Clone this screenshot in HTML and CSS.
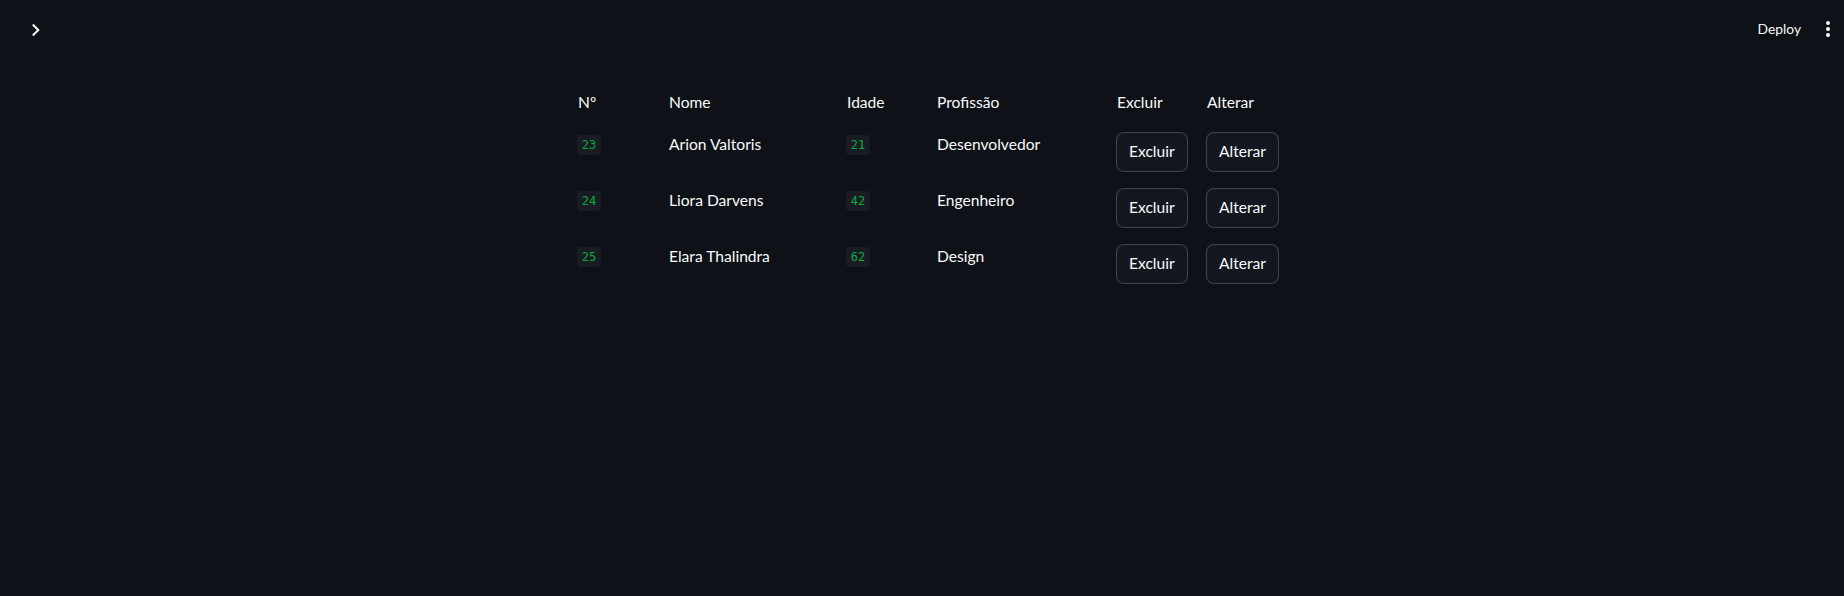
FILE: index.html
```html
<!DOCTYPE html>
<html lang="pt">
<head>
<meta charset="utf-8">
<title>App</title>
<link rel="stylesheet" href="styles.css">
</head>
<body>
<header class="topbar">
  <button class="sidebar-toggle" aria-label="Abrir barra lateral">
    <svg width="8" height="12" viewBox="0 0 8 12"><path d="M1.5 1.2 L6.3 6 L1.5 10.8" fill="none" stroke="#fafafa" stroke-width="2" stroke-linecap="square"/></svg>
  </button>
  <div class="topbar-actions">
    <button class="deploy">Deploy</button>
    <button class="menu" aria-label="Menu">
      <svg width="6" height="18" viewBox="0 0 6 18"><circle cx="3" cy="3" r="2"/><circle cx="3" cy="9" r="2"/><circle cx="3" cy="15" r="2"/></svg>
    </button>
  </div>
</header>
<main class="main">
  <div class="table">
    <div class="cell head">Nº</div>
    <div class="cell head">Nome</div>
    <div class="cell head">Idade</div>
    <div class="cell head">Profissão</div>
    <div class="cell head">Excluir</div>
    <div class="cell head">Alterar</div>

    <div class="cell"><code class="badge">23</code></div>
    <div class="cell text">Arion Valtoris</div>
    <div class="cell"><code class="badge">21</code></div>
    <div class="cell text">Desenvolvedor</div>
    <div class="cell"><button class="btn">Excluir</button></div>
    <div class="cell"><button class="btn">Alterar</button></div>

    <div class="cell"><code class="badge">24</code></div>
    <div class="cell text">Liora Darvens</div>
    <div class="cell"><code class="badge">42</code></div>
    <div class="cell text">Engenheiro</div>
    <div class="cell"><button class="btn">Excluir</button></div>
    <div class="cell"><button class="btn">Alterar</button></div>

    <div class="cell"><code class="badge">25</code></div>
    <div class="cell text">Elara Thalindra</div>
    <div class="cell"><code class="badge">62</code></div>
    <div class="cell text">Design</div>
    <div class="cell"><button class="btn">Excluir</button></div>
    <div class="cell"><button class="btn">Alterar</button></div>
  </div>
</main>
</body>
</html>
```

FILE: styles.css
```css
html, body {
  margin: 0;
  padding: 0;
  background: #0e1117;
  color: #fafafa;
  font-family: "Source Sans Pro", Lato, "Liberation Sans", sans-serif;
  font-size: 15.6px;
  height: 100%;
}

.topbar {
  height: 60px;
  display: flex;
  align-items: center;
  justify-content: space-between;
  padding: 0 12px 0 29px;
  box-sizing: border-box;
}

.sidebar-toggle, .deploy, .menu {
  background: none;
  border: 0;
  padding: 0;
  color: #fafafa;
  cursor: pointer;
}

.sidebar-toggle {
  width: 14px;
  height: 14px;
  display: flex;
  align-items: center;
  justify-content: center;
  margin-top: 0;
}

.topbar-actions {
  display: flex;
  align-items: center;
  gap: 23px;
  margin-top: -2px;
}

.deploy {
  font-family: inherit;
  font-size: 13.8px;
  line-height: 20px;
}

.menu {
  display: flex;
  fill: #fafafa;
  width: 8px;
  justify-content: center;
}

.main {
  padding-top: 30px;
}

.table {
  margin-left: calc(50% - 345px);
  display: grid;
  grid-template-columns: 91px 178px 90px 180px 90px 90px;
  grid-auto-rows: auto;
  row-gap: 16px;
}

.cell {
  line-height: 25.6px;
  white-space: nowrap;
}

.head, .text {
  padding-left: 1px;
}

.badge {
  display: inline-block;
  margin-top: 3px;
  height: 20px;
  line-height: 20px;
  padding: 0 4.8px;
  border-radius: 4px;
  background: #1a1c24;
  color: #09ab3b;
  font-family: "DejaVu Sans Mono", "Liberation Mono", monospace;
  font-size: 12px;
  vertical-align: top;
}

.btn {
  height: 40px;
  padding: 0 12px;
  box-sizing: border-box;
  background: #13171f;
  border: 1px solid rgba(250, 250, 250, 0.2);
  border-radius: 8px;
  color: #fafafa;
  font-family: inherit;
  font-size: 15.6px;
  line-height: 1.6;
  cursor: pointer;
}
```
